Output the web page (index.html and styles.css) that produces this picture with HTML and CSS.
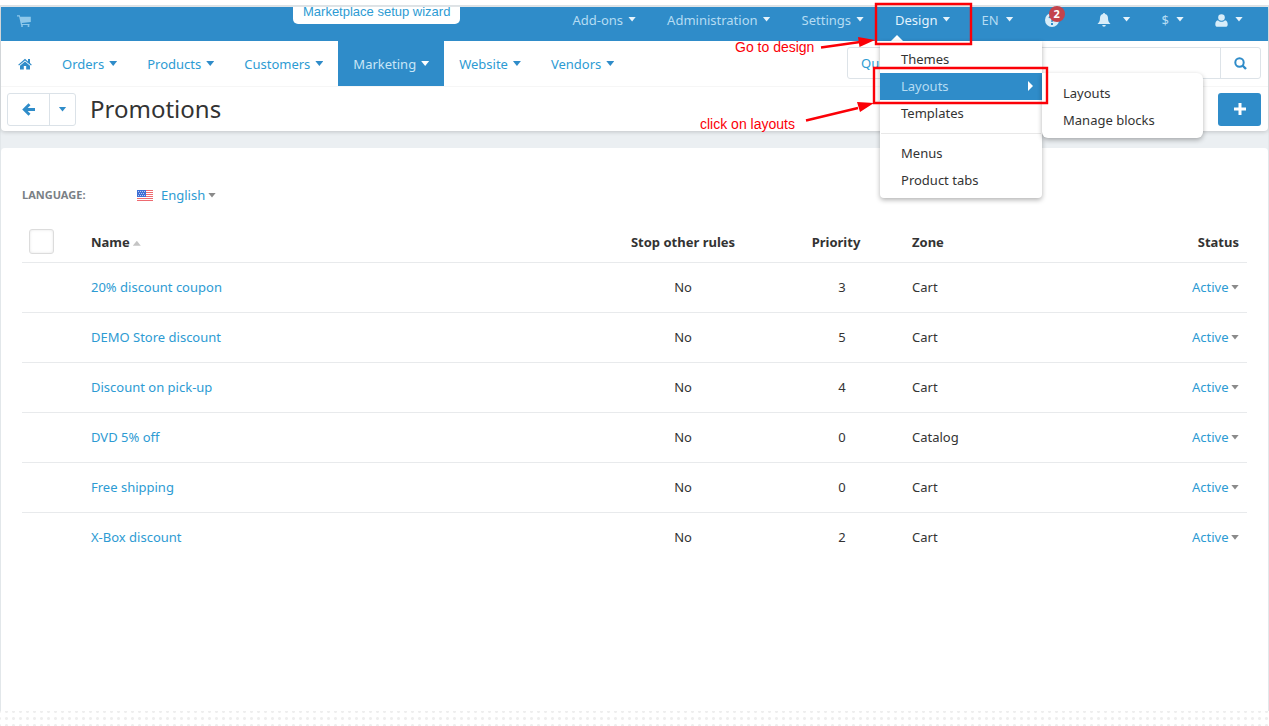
FILE: index.html
```html
<!DOCTYPE html>
<html lang="en">
<head>
    <meta charset="UTF-8">
    <meta name="viewport" content="width=device-width, initial-scale=1.0">
    <title>Promotions</title>
    <link rel="stylesheet" href="styles.css">
</head>
<body>
    <div class="app">
        <header class="header">
            <div class="topbar">
                <a href="#" class="cart" aria-label="Storefront">
                    <svg width="14" height="12" viewBox="0 0 14 12"><path d="M0 .3h2.800l.4 1.400h10.600v5.300L4.800 8l.2 1h7.500v1H4L2.100 1.500H0z"/><circle cx="5" cy="11" r="1"/><circle cx="11.500" cy="11" r="1"/></svg>
                </a>
                <a href="#" class="wizard">Marketplace setup wizard</a>
                <ul class="top-menu">
                    <li><a href="#">Add-ons<b class="caret"></b></a></li>
                    <li><a href="#">Administration<b class="caret"></b></a></li>
                    <li><a href="#">Settings<b class="caret"></b></a></li>
                    <li class="open">
                        <a href="#">Design<b class="caret"></b></a>
                        <ul class="dropdown">
                            <li><a href="#">Themes</a></li>
                            <li class="submenu-item">
                                <a href="#" class="selected">Layouts<b class="caret-right"></b></a>
                                <ul class="submenu">
                                    <li><a href="#">Layouts</a></li>
                                    <li><a href="#">Manage blocks</a></li>
                                </ul>
                            </li>
                            <li><a href="#">Templates</a></li>
                            <li class="divider"></li>
                            <li><a href="#">Menus</a></li>
                            <li><a href="#">Product tabs</a></li>
                        </ul>
                    </li>
                    <li class="short"><a href="#">EN<b class="caret"></b></a></li>
                    <li>
                        <a href="#" class="help" aria-label="Help">
                            <svg width="14" height="14" viewBox="0 0 14 14"><circle cx="7" cy="7" r="7"/><path fill="none" stroke="#2f8cc9" stroke-width="2" d="M4.500 5.200C4.700 3 9.300 2.800 9.300 5.200 9.300 6.800 7 6.800 7 8.800M7 10v2"/></svg>
                            <span class="badge">2</span>
                        </a>
                    </li>
                    <li class="bell">
                        <a href="#" aria-label="Notifications">
                            <svg width="14" height="14" viewBox="0 0 14 14"><path d="M7 0c.6 0 1 .4 1 1 2.200.5 3 2.200 3 4 0 3 .8 4.500 2.500 6H.5C2.200 9.500 3 8 3 5c0-1.800.8-3.500 3-4 0-.6.4-1 1-1zM5.200 12h3.600a1.800 1.800 0 0 1-3.600 0z"/></svg>
                            <b class="caret"></b>
                        </a>
                    </li>
                    <li class="short"><a href="#">$<b class="caret"></b></a></li>
                    <li class="short">
                        <a href="#" aria-label="Account">
                            <svg width="13" height="13" viewBox="0 0 13 13"><circle cx="6.500" cy="3.500" r="3.300"/><path d="M3 6.200c2 2 5 2 7 0 2 .4 2.700 2 2.700 4.300 0 1.500-.8 2.300-2.200 2.300h-8C1.100 12.800.3 12 .3 10.500.3 8.200 1 6.600 3 6.200z"/></svg>
                            <b class="caret"></b>
                        </a>
                    </li>
                </ul>
            </div>

            <nav class="main-nav">
                <ul class="nav-menu">
                    <li>
                        <a href="#" class="home" aria-label="Home">
                            <svg width="14" height="12" viewBox="0 0 14 12"><path d="M7 .8 10 3.400V1h2v4.100l1.800 1.600-.8.9L7 2.500 1 7.600l-.8-.9z"/><path d="M7 3.500l5 4.200V11.500H8.200V8H5.800v3.500H2V7.700z"/></svg>
                        </a>
                    </li>
                    <li><a href="#">Orders<b class="caret"></b></a></li>
                    <li><a href="#">Products<b class="caret"></b></a></li>
                    <li><a href="#">Customers<b class="caret"></b></a></li>
                    <li><a href="#" class="active">Marketing<b class="caret"></b></a></li>
                    <li><a href="#">Website<b class="caret"></b></a></li>
                    <li><a href="#">Vendors<b class="caret"></b></a></li>
                </ul>
                <form class="search">
                    <input type="text" placeholder="Quick search" aria-label="Quick search">
                    <button type="button" aria-label="Search">
                        <svg width="13" height="13" viewBox="0 0 13 13" fill="none" stroke="currentColor" stroke-width="2"><circle cx="5.500" cy="5.500" r="4.200"/><path d="M8.500 8.500l3.500 3.500" stroke-width="2.400"/></svg>
                    </button>
                </form>
            </nav>

            <div class="actions">
                <div class="btn-group">
                    <button type="button" class="btn-back" aria-label="Back">
                        <svg width="13" height="13" viewBox="0 0 13 13" fill="none" stroke="currentColor" stroke-width="2.800"><path d="M7.500 1.200 2.200 6.500 7.500 11.800M2.500 6.500H13"/></svg>
                    </button>
                    <button type="button" class="btn-more" aria-label="Recent pages"><b class="caret"></b></button>
                </div>
                <h1>Promotions</h1>
                <button type="button" class="btn-add" aria-label="Add promotion">
                    <svg width="12" height="12" viewBox="0 0 12 12"><path d="M4.500 0h3v4.500H12v3H7.500V12h-3V7.500H0v-3h4.500z"/></svg>
                </button>
            </div>
        </header>

        <main class="content">
            <div class="language">
                <label for="language">Language:</label>
                <svg class="flag" width="16" height="11" viewBox="0 0 16 11">
                    <path fill="#fff" d="M0 0h16v11H0z"/>
                    <path stroke="#ee6a70" d="M0 .5h16M0 2.500h16M0 4.500h16M0 6.500h16M0 8.500h16M0 10.500h16"/>
                    <path fill="#3f6fd4" d="M0 0h9v7H0z"/>
                    <path stroke="#b9c8f2" stroke-dasharray="1 1" d="M1 1.500h7M2 3.500h6M1 5.500h7"/>
                </svg>
                <span class="select">
                    <select id="language"><option>English</option></select>
                </span>
            </div>

            <table class="promotions">
                <thead>
                    <tr>
                        <th class="col-check"><input type="checkbox" aria-label="Select all"></th>
                        <th>Name<b class="sort"></b></th>
                        <th class="col-stop">Stop other rules</th>
                        <th class="col-priority">Priority</th>
                        <th class="col-zone">Zone</th>
                        <th class="col-status">Status</th>
                    </tr>
                </thead>
                <tbody>
                    <tr>
                        <td></td>
                        <td><a href="#">20% discount coupon</a></td>
                        <td class="col-stop">No</td>
                        <td class="col-priority">3</td>
                        <td>Cart</td>
                        <td class="col-status"><span class="select"><select aria-label="Status"><option>Active</option></select></span></td>
                    </tr>
                    <tr>
                        <td></td>
                        <td><a href="#">DEMO Store discount</a></td>
                        <td class="col-stop">No</td>
                        <td class="col-priority">5</td>
                        <td>Cart</td>
                        <td class="col-status"><span class="select"><select aria-label="Status"><option>Active</option></select></span></td>
                    </tr>
                    <tr>
                        <td></td>
                        <td><a href="#">Discount on pick-up</a></td>
                        <td class="col-stop">No</td>
                        <td class="col-priority">4</td>
                        <td>Cart</td>
                        <td class="col-status"><span class="select"><select aria-label="Status"><option>Active</option></select></span></td>
                    </tr>
                    <tr>
                        <td></td>
                        <td><a href="#">DVD 5% off</a></td>
                        <td class="col-stop">No</td>
                        <td class="col-priority">0</td>
                        <td>Catalog</td>
                        <td class="col-status"><span class="select"><select aria-label="Status"><option>Active</option></select></span></td>
                    </tr>
                    <tr>
                        <td></td>
                        <td><a href="#">Free shipping</a></td>
                        <td class="col-stop">No</td>
                        <td class="col-priority">0</td>
                        <td>Cart</td>
                        <td class="col-status"><span class="select"><select aria-label="Status"><option>Active</option></select></span></td>
                    </tr>
                    <tr>
                        <td></td>
                        <td><a href="#">X-Box discount</a></td>
                        <td class="col-stop">No</td>
                        <td class="col-priority">2</td>
                        <td>Cart</td>
                        <td class="col-status"><span class="select"><select aria-label="Status"><option>Active</option></select></span></td>
                    </tr>
                </tbody>
            </table>
        </main>
    </div>

    <!-- step markers drawn over the page -->
    <div class="notes">
        <svg width="569" height="140" viewBox="0 0 569 140">
            <g fill="none" stroke="#fb0007" stroke-width="2.400">
                <path d="M176 4h95v40h-95zM174 68h173v35H174z"/>
                <path d="M121 47.500 160 42M106 120.500 158 108"/>
            </g>
            <path fill="#fb0007" d="M175 40l-17-3 1.500 10zM174 103l-17-1 3 10z"/>
        </svg>
        <span class="note note-design">Go to design</span>
        <span class="note note-layouts">click on layouts</span>
    </div>
</body>
</html>
```

FILE: styles.css
```css
* {
    box-sizing: border-box;
}
body {
    display: flex;
    flex-direction: column;
    position: relative;
    min-height: 100vh;
    margin: 0;
    padding: 5px 0 15px;
    font-family: "Noto Sans", sans-serif;
    font-size: 13px;
    line-height: 20px;
    color: #333;
    background: #fff radial-gradient(circle, #eee 1px, transparent 2px) 3px 1px / 7px 7px;
}
body::before {
    content: "";
    position: absolute;
    top: 0;
    left: 0;
    right: 0;
    height: 5px;
    background: #fff;
}
ul {
    list-style: none;
    margin: 0;
    padding: 0;
}
a {
    color: #2d9bd3;
    text-decoration: none;
}
button,
input,
select {
    font: inherit;
    color: inherit;
}
button {
    display: flex;
    align-items: center;
    justify-content: center;
    padding: 0;
    cursor: pointer;
}
svg {
    display: block;
    fill: currentColor;
}
svg[fill="none"] {
    fill: none;
}
.app {
    display: flex;
    flex-direction: column;
    flex: 1;
    border: 1px solid #e2e7ea;
    border-bottom: 0;
    padding-top: 1px;
    background: #ebeff2;
}
.caret {
    width: 8px;
    height: 5px;
    margin-left: 5px;
    background: currentColor;
    clip-path: polygon(0 0, 100% 0, 50% 100%);
}

/* header */
.header {
    background: #fff;
    border-radius: 0 0 4px 4px;
    box-shadow: 0 1px 4px rgba(0, 0, 0, 0.18);
}
.topbar {
    display: flex;
    height: 34px;
    padding: 0 10px 0 16px;
    background: #2f8cc9;
}
.cart {
    padding-top: 8px;
    color: #8fc8ea;
}
.wizard {
    height: 17px;
    margin-left: 262px;
    padding: 0 10px;
    border-radius: 0 0 5px 5px;
    font-family: "Liberation Sans", Arial, sans-serif;
    line-height: 10px;
    background: #fff;
}
.top-menu {
    display: flex;
    margin-left: auto;
}
.top-menu > li {
    position: relative;
}
.top-menu > li > a {
    display: flex;
    align-items: center;
    height: 26px;
    padding: 0 15px 0 16px;
    color: #b5dcf3;
}
.top-menu > li > a .caret {
    margin-bottom: 2px;
    color: #e6f3fb;
}
.top-menu svg {
    color: #d8edf9;
}
.top-menu .open > a {
    color: #e3f3fd;
}
.top-menu .open > a::after {
    content: "";
    position: absolute;
    top: 28px;
    left: 12px;
    border: 6px solid transparent;
    border-top: 0;
    border-bottom-color: #fff;
}
.top-menu .bell .caret {
    margin-left: 12px;
}
.top-menu .short .caret {
    margin-left: 7px;
}
.top-menu > .bell {
    margin-left: 7px;
}
.help {
    position: relative;
}
.badge {
    position: absolute;
    top: -1px;
    right: 9px;
    width: 16px;
    height: 16px;
    border-radius: 50%;
    font-size: 11px;
    font-weight: bold;
    line-height: 15px;
    text-align: center;
    color: #fff;
    background: #c3434b;
}

/* design dropdown */
.dropdown,
.submenu {
    position: absolute;
    z-index: 5;
    background: #fff;
    box-shadow: 0 2px 5px rgba(0, 0, 0, 0.3);
}
.dropdown {
    top: 34px;
    left: 1px;
    width: 162px;
    padding: 5px 0 4px;
    border-radius: 0 0 4px 4px;
}
.dropdown a {
    display: flex;
    align-items: center;
    justify-content: space-between;
    height: 27px;
    padding: 0 9px 1px 21px;
    color: #333;
}
.dropdown .selected {
    color: #b5dcf3;
    background: #2f8cc9;
}
.divider {
    height: 1px;
    margin: 6px 1px;
    background: #e8e8e8;
}
.caret-right {
    width: 5px;
    height: 10px;
    background: #fff;
    clip-path: polygon(0 0, 100% 50%, 0 100%);
}
.submenu-item {
    position: relative;
}
.submenu {
    top: 0;
    left: 100%;
    width: 161px;
    padding: 7px 0 4px;
    border-radius: 0 6px 6px 6px;
}

/* main navigation */
.main-nav {
    display: flex;
    justify-content: space-between;
    height: 46px;
    padding: 0 7px 0 2px;
    border-bottom: 1px solid #f6f6f6;
}
.nav-menu {
    display: flex;
}
.nav-menu a {
    display: flex;
    align-items: center;
    height: 45px;
    padding: 0 15px;
}
.nav-menu .active {
    color: #c9e6f7;
    background: #2f8cc9;
}
.nav-menu .caret,
.nav-menu .home {
    color: #2f8cc9;
}
.nav-menu .active .caret {
    color: #fff;
}
.search {
    display: flex;
    width: 414px;
    height: 32px;
    margin-top: 6px;
    border: 1px solid #dde3e8;
    border-radius: 3px;
}
.search input {
    flex: 1;
    min-width: 0;
    padding: 0 13px;
    border: 0;
    background: none;
}
.search input::placeholder {
    color: #2d9bd3;
}
.search button {
    width: 40px;
    border: 0;
    border-left: 1px solid #dde3e8;
    color: #2f8cc9;
    background: none;
}

/* title and actions */
.actions {
    display: flex;
    align-items: center;
    height: 44px;
    padding: 0 7px 0 6px;
}
.actions h1 {
    margin: 0 auto 0 14px;
    font-size: 24px;
    font-weight: normal;
    line-height: 32px;
}
.btn-group {
    display: flex;
    width: 69px;
    height: 33px;
    border: 1px solid #dbe2e8;
    border-radius: 3px;
}
.btn-group button {
    border: 0;
    color: #2f8cc9;
    background: none;
}
.btn-back {
    flex: 1;
}
.btn-group .btn-more {
    width: 26px;
    border-left: 1px solid #dbe2e8;
}
.btn-more .caret {
    margin: 0;
}
.btn-add {
    width: 43px;
    height: 33px;
    border: 0;
    border-radius: 3px;
    color: #fff;
    background: #2f8cc9;
}

/* content */
.content {
    flex: 1;
    margin-top: 17px;
    padding: 37px 21px 20px;
    border-radius: 4px 4px 0 0;
    background: #fff;
}
.language {
    display: flex;
    align-items: center;
}
.language label {
    width: 115px;
    font-size: 11px;
    font-weight: bold;
    text-transform: uppercase;
    color: #7a8085;
}
.flag {
    margin-right: 8px;
}
.select {
    display: inline-flex;
    align-items: center;
}
.select select {
    appearance: none;
    padding: 0;
    border: 0;
    color: #2d9bd3;
    background: none;
}
.select::after {
    content: "";
    width: 8px;
    height: 5px;
    margin-left: 2px;
    background: #8a8a8a;
    clip-path: polygon(0 0, 100% 0, 50% 100%);
}
.promotions {
    width: 100%;
    margin-top: 17px;
    border-collapse: collapse;
    table-layout: fixed;
}
.promotions th,
.promotions td {
    height: 50px;
    padding: 0;
    border-bottom: 1px solid #e8eaec;
    text-align: left;
}
.promotions th {
    height: 40px;
}
.promotions tr:last-child td {
    border-bottom: 0;
}
.promotions .col-check {
    width: 69px;
    padding-left: 7px;
}
.col-check input {
    appearance: none;
    display: block;
    width: 25px;
    height: 25px;
    margin: 0;
    border: 1px solid #dcdcdc;
    border-radius: 3px;
    box-shadow: inset 0 0 3px #e4e4e4;
}
.sort {
    display: inline-block;
    width: 8px;
    height: 5px;
    margin: 0 0 1px 3px;
    background: #c4c4c4;
    clip-path: polygon(50% 0, 100% 100%, 0 100%);
}
.promotions thead tr th {
    border-bottom: 1px solid #e8eaec;
}
.promotions .col-stop {
    width: 154px;
    text-align: center;
}
.promotions .col-priority {
    width: 152px;
    text-align: center;
}
.promotions td.col-priority {
    padding-left: 12px;
}
.promotions .col-zone {
    width: 188px;
}
.promotions .col-status {
    width: 147px;
    padding-right: 8px;
    text-align: right;
}

/* step markers */
.notes {
    position: absolute;
    z-index: 10;
    top: 0;
    right: 0;
    width: 569px;
    pointer-events: none;
    font-family: "Liberation Sans", Arial, sans-serif;
    font-size: 14px;
    color: #fb0007;
}
.notes svg {
    margin-left: auto;
}
.notes svg {
    position: relative;
    left: 0;
}
.note {
    position: absolute;
    white-space: nowrap;
}
.note-design {
    top: 37px;
    left: 35px;
}
.note-layouts {
    top: 114px;
    left: 0;
}
```
